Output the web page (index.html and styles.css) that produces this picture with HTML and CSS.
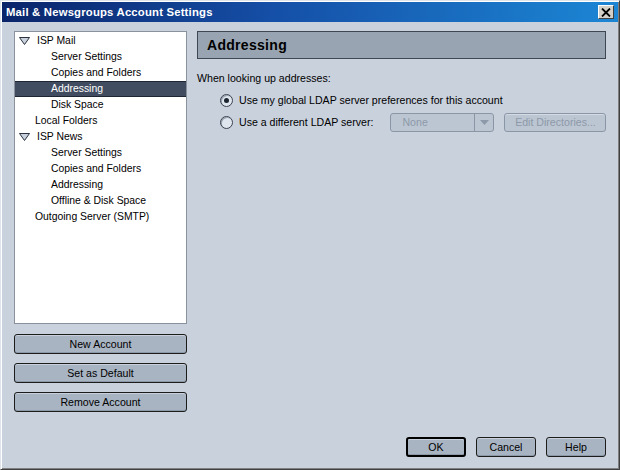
FILE: index.html
```html
<!DOCTYPE html>
<html>
<head>
<meta charset="utf-8">
<title>Mail &amp; Newsgroups Account Settings</title>
<link rel="stylesheet" href="styles.css">
</head>
<body>
<div class="window">
  <div class="titlebar">
    <span class="title">Mail &amp; Newsgroups Account Settings</span>
    <span class="close">
      <svg width="10" height="9" viewBox="0 0 10 9"><path d="M1 0.5 L9 8.5 M9 0.5 L1 8.5" stroke="#000" stroke-width="1.8" fill="none"/></svg>
    </span>
  </div>
  <div class="content">
    <div class="leftcol">
      <div class="tree">
        <div class="row lvl0"><svg class="twisty" width="11" height="8" viewBox="0 0 11 8"><path d="M0.5 0.5 H10.5 L5.5 7.5 Z" fill="#c9d1dd" stroke="#2a3140" stroke-width="1"/></svg>ISP Mail</div>
        <div class="row lvl1">Server Settings</div>
        <div class="row lvl1">Copies and Folders</div>
        <div class="row lvl1 selected">Addressing</div>
        <div class="row lvl1">Disk Space</div>
        <div class="row lvlleaf">Local Folders</div>
        <div class="row lvl0"><svg class="twisty" width="11" height="8" viewBox="0 0 11 8"><path d="M0.5 0.5 H10.5 L5.5 7.5 Z" fill="#c9d1dd" stroke="#2a3140" stroke-width="1"/></svg>ISP News</div>
        <div class="row lvl1">Server Settings</div>
        <div class="row lvl1">Copies and Folders</div>
        <div class="row lvl1">Addressing</div>
        <div class="row lvl1">Offline &amp; Disk Space</div>
        <div class="row lvlleaf">Outgoing Server (SMTP)</div>
      </div>
      <div class="btn wide">New Account</div>
      <div class="btn wide">Set as Default</div>
      <div class="btn wide">Remove Account</div>
    </div>
    <div class="rightcol">
      <div class="header">Addressing</div>
      <div class="label">When looking up addresses:</div>
      <div class="radiorow first">
        <span class="radio checked"></span>
        <span class="rlabel">Use my global LDAP server preferences for this account</span>
      </div>
      <div class="radiorow">
        <span class="radio"></span>
        <span class="rlabel">Use a different LDAP server:</span>
        <div class="select">
          <span class="seltext">None</span>
          <span class="selarrow"><svg width="9" height="5" viewBox="0 0 9 5"><path d="M0 0 H9 L4.5 5 Z" fill="#8d99a9"/></svg></span>
        </div>
        <div class="btn disabled edit">Edit Directories...</div>
      </div>
      <div class="footer">
        <div class="btn small default">OK</div>
        <div class="btn small">Cancel</div>
        <div class="btn small">Help</div>
      </div>
    </div>
  </div>
</div>
</body>
</html>
```
FILE: styles.css
```css
html, body {
  margin: 0;
  padding: 0;
}
body {
  width: 620px;
  height: 470px;
  font-family: "Liberation Sans", Arial, sans-serif;
  font-size: 10.6px;
  color: #000;
}
.window {
  box-sizing: border-box;
  width: 620px;
  height: 470px;
  background: #c9d1dd;
  border-top: 1px solid #dfe3ea;
  border-left: 1px solid #dfe3ea;
  border-right: 1px solid #404040;
  border-bottom: 1px solid #404040;
  box-shadow: inset 1px 1px 0 #ffffff, inset -1px -1px 0 #808080;
  padding: 1px;
  display: flex;
  flex-direction: column;
}
.titlebar {
  height: 20px;
  flex: none;
  background: linear-gradient(to right, #0a246a 0%, #1550a8 45%, #1c86d4 100%);
  display: flex;
  align-items: center;
  justify-content: space-between;
  padding: 0 4px 0 4px;
}
.title {
  color: #fff;
  font-weight: bold;
  font-size: 11.3px;
  letter-spacing: 0.2px;
}
.close {
  width: 14px;
  height: 12px;
  background: #d4d0c8;
  border-top: 1px solid #ffffff;
  border-left: 1px solid #ffffff;
  border-right: 1px solid #404040;
  border-bottom: 1px solid #404040;
  display: flex;
  align-items: center;
  justify-content: center;
}
.content {
  flex: 1;
  display: grid;
  grid-template-columns: 173px minmax(0, 1fr);
  column-gap: 10px;
  padding: 9px 12px 11px 12px;
  min-height: 0;
}
.leftcol {
  display: flex;
  flex-direction: column;
}
.tree {
  box-sizing: border-box;
  height: 293px;
  background: #fff;
  border: 1px solid #8a929e;
  padding-top: 1px;
  margin-bottom: 10px;
  font-size: 10.4px;
}
.row {
  box-sizing: border-box;
  height: 16px;
  line-height: 16px;
  white-space: nowrap;
  display: flex;
  align-items: center;
}
.lvl0 { padding-left: 4px; }
.lvl1 { padding-left: 36px; }
.lvlleaf { padding-left: 20px; }
.twisty {
  margin-right: 7px;
  flex: none;
}
.selected {
  background: #414c60;
  color: #fff;
  border-top: 1px solid #1f2633;
  border-bottom: 1px solid #1f2633;
}
.btn {
  box-sizing: border-box;
  height: 20px;
  border: 1px solid #1c1c1c;
  border-radius: 3px;
  background: #a9b4c3;
  box-shadow: inset 0 1px 0 #c8d0dc, inset 0 -1px 0 #8e99a8;
  display: flex;
  align-items: center;
  justify-content: center;
  white-space: nowrap;
}
.wide { margin-bottom: 9px; }
.rightcol {
  display: flex;
  flex-direction: column;
  min-width: 0;
}
.header {
  box-sizing: border-box;
  height: 28px;
  background: #98a4b1;
  border: 1px solid #3f4753;
  font-weight: bold;
  font-size: 14px;
  letter-spacing: 0.3px;
  padding-left: 9px;
  display: flex;
  align-items: center;
}
.label {
  margin-top: 12px;
  line-height: 14px;
}
.radiorow {
  display: flex;
  align-items: center;
  padding-left: 23px;
  height: 20px;
  margin-top: 2px;
  white-space: nowrap;
}
.radiorow.first { margin-top: 5px; }
.rlabel { flex: none; }
.radio {
  box-sizing: border-box;
  width: 13px;
  height: 13px;
  border-radius: 50%;
  border: 1px solid #3a4250;
  background: #dfe6ee;
  box-shadow: inset 1px 1px 0 #9aa4b2;
  margin-right: 6px;
  position: relative;
  flex: none;
}
.radio.checked::after {
  content: "";
  position: absolute;
  left: 3px;
  top: 3px;
  width: 5px;
  height: 5px;
  border-radius: 50%;
  background: #1c2430;
}
.select {
  box-sizing: border-box;
  margin-left: 17px;
  width: 104px;
  flex: none;
  height: 19px;
  border: 1px solid #8a96a6;
  border-radius: 3px;
  background: #bcc6d2;
  display: flex;
  color: #8d99a9;
}
.seltext {
  flex: 1;
  padding-left: 11px;
  display: flex;
  align-items: center;
}
.selarrow {
  width: 18px;
  border-left: 1px solid #8a96a6;
  display: flex;
  align-items: center;
  justify-content: center;
}
.btn.disabled {
  border-color: #8a96a6;
  background: #bcc6d2;
  box-shadow: inset 0 1px 0 #d4dbe4;
  color: #8d99a9;
}
.edit {
  margin-left: 10px;
  width: 102px;
  flex: none;
  height: 19px;
}
.footer {
  margin-top: auto;
  display: flex;
  justify-content: flex-end;
  gap: 10px;
}
.small {
  width: 60px;
}
.default {
  border: 2px solid #000;
}
```
